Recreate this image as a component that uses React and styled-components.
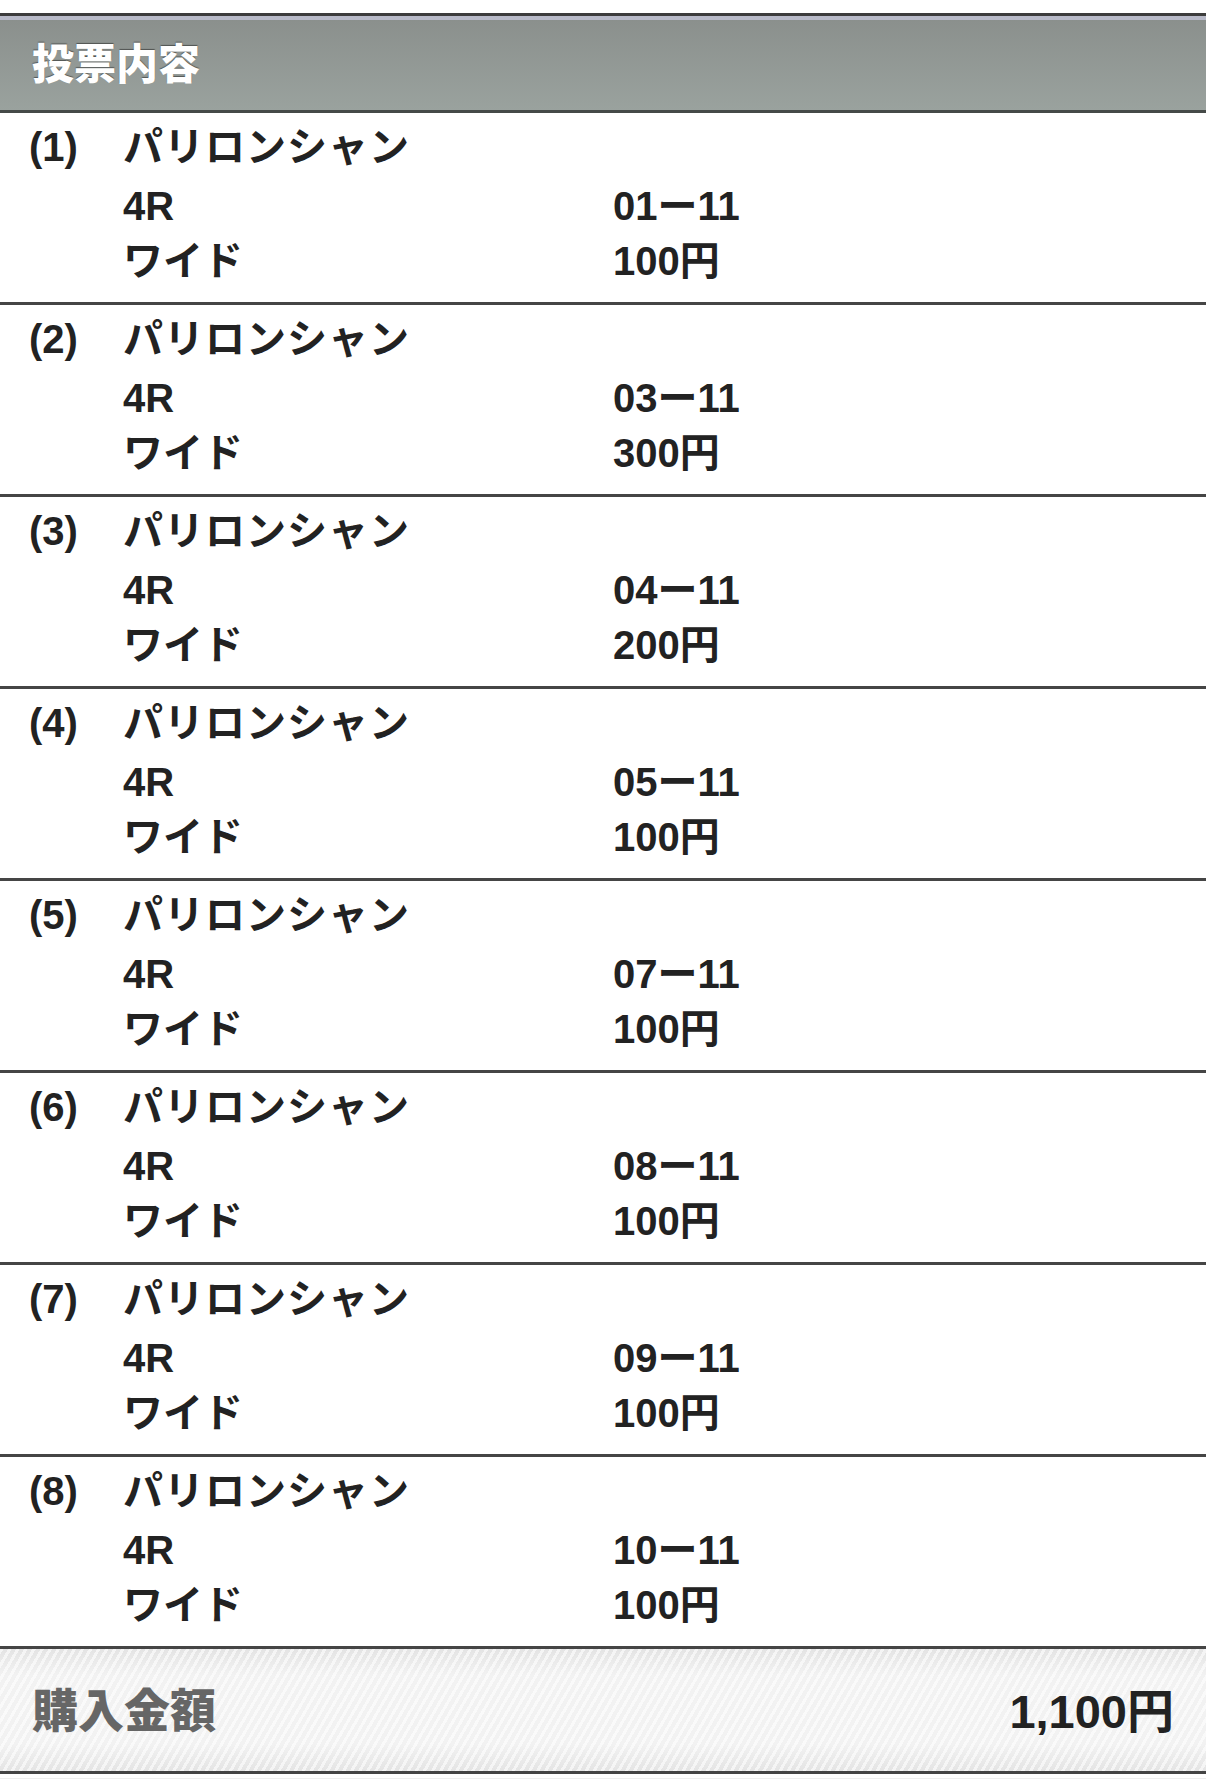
import React from "react";
import styled, { createGlobalStyle } from "styled-components";

const bets = [
  { no: 1, combo: "01ー11", amount: "100円" },
  { no: 2, combo: "03ー11", amount: "300円" },
  { no: 3, combo: "04ー11", amount: "200円" },
  { no: 4, combo: "05ー11", amount: "100円" },
  { no: 5, combo: "07ー11", amount: "100円" },
  { no: 6, combo: "08ー11", amount: "100円" },
  { no: 7, combo: "09ー11", amount: "100円" },
  { no: 8, combo: "10ー11", amount: "100円" },
];

const GlobalStyle = createGlobalStyle`
  html, body {
    margin: 0;
    padding: 0;
    background: #fff;
  }
  body {
    font-family: "Liberation Sans", "Noto Sans CJK JP", sans-serif;
    font-weight: bold;
    color: #222;
  }
`;

const Page = styled.div`
  width: 1206px;
  padding-top: 13px;
`;

const Header = styled.div`
  height: 88px;
  border-top: 3px solid #3c3c3c;
  border-bottom: 3px solid #454a48;
  box-shadow: inset 0 4px 0 #b8bac8;
  background: linear-gradient(#8a8f8c, #9aa29e);
  display: flex;
  align-items: center;
  padding: 0 0 6px 32px;
  box-sizing: content-box;
`;

const HeaderTitle = styled.h1`
  margin: 0;
  font-size: 42px;
  font-weight: 900;
  color: #fff;
  text-shadow: 0 -1px 1px rgba(0, 0, 0, 0.45);
  font-family: "Noto Sans CJK JP", sans-serif;
`;

const Row = styled.div`
  display: grid;
  grid-template-columns: 94px 490px 1fr;
  grid-template-rows: 52px 59px 55px;
  align-items: end;
  padding: 8px 0 15px 29px;
  border-bottom: 3px solid #454545;
  font-size: 40px;
  line-height: 51px;
`;

const Cell = styled.div`
  white-space: nowrap;
  letter-spacing: ${({ $kana }) => ($kana ? "1px" : "0")};
`;

const Footer = styled.div`
  height: 125px;
  border-bottom: 3px solid #444;
  display: flex;
  align-items: center;
  justify-content: space-between;
  padding: 0 32px;
  box-sizing: border-box;
  background:
    repeating-linear-gradient(
      120deg,
      rgba(255, 255, 255, 0.6) 0 3px,
      rgba(255, 255, 255, 0) 3px 7px
    ),
    linear-gradient(#e4e4e4, #f2f2f2 22%, #f2f2f2 78%, #e4e4e4);
`;

const FooterLabel = styled.div`
  font-size: 46px;
  font-weight: 900;
  color: #666;
  font-family: "Noto Sans CJK JP", sans-serif;
  margin-bottom: 6px;
`;

const FooterTotal = styled.div`
  font-size: 47px;
  color: #222;
  margin-bottom: 6px;
`;

const Under = styled.div`
  height: 4px;
  border-bottom: 1px solid #eee;
`;

export default function App() {
  return (
    <>
      <GlobalStyle />
      <Page>
        <Header>
          <HeaderTitle>投票内容</HeaderTitle>
        </Header>
        {bets.map((b) => (
          <Row key={b.no}>
            <Cell>({b.no})</Cell>
            <Cell $kana>パリロンシャン</Cell>
            <Cell />
            <Cell />
            <Cell>4R</Cell>
            <Cell>{b.combo}</Cell>
            <Cell />
            <Cell>ワイド</Cell>
            <Cell>{b.amount}</Cell>
          </Row>
        ))}
        <Footer>
          <FooterLabel>購入金額</FooterLabel>
          <FooterTotal>1,100円</FooterTotal>
        </Footer>
        <Under />
      </Page>
    </>
  );
}
